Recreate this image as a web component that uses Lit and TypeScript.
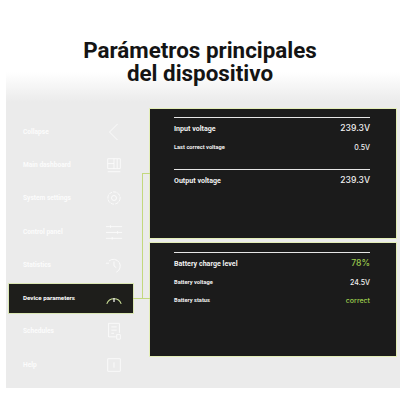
import { LitElement, html, css, svg } from "lit";
import { customElement } from "lit/decorators.js";

const s = (body: unknown) => html`<svg viewBox="0 0 20 20" width="18" height="18" fill="none" stroke="currentColor" stroke-width="1">${body}</svg>`;

const menu = [
  { label: "Collapse", icon: s(svg`<path d="M14 1 5 10l9 9"/>`) },
  { label: "Main dashboard", icon: s(svg`<path d="M3 3h14v11H3zM3 8.5h7M10 3v11M13.5 3v11M3 17.5h14"/>`) },
  { label: "System settings", icon: s(svg`<circle cx="10" cy="10" r="2.8"/><circle cx="10" cy="10" r="6.8" stroke-dasharray="4 1"/>`) },
  { label: "Control panel", icon: s(svg`<path d="M1 4h18M1 10.5h18M1 17h18M6 2.5v3M14 9v3M8 15.5v3"/>`) },
  { label: "Statistics", icon: s(svg`<path d="M4.5 5.5a7.5 7.5 0 1 1 8 12.5M10 6v5l2.5 2M1 8h3.5"/>`) },
  { label: "Device parameters", active: true, icon: s(svg`<path d="M2 16.5a8.5 8.5 0 0 1 16 0" stroke="#c9dd95" stroke-width="1.2"/><path d="M10 10v4.5" stroke="#f4f4f4" stroke-width="1.4"/>`) },
  { label: "Schedules", icon: s(svg`<path d="M16 12V1.5H4v15h8M7 5.5h6M7 9h6M7 12.5h3M13 14h4v5h-4z"/>`) },
  { label: "Help", icon: s(svg`<path d="M3 3h14v14H3zM10 7v6"/>`) },
];

@customElement("app-root")
export class AppRoot extends LitElement {
  static styles = css`
    :host { display: block; width: 400px; height: 400px; padding-top: 39px; box-sizing: border-box; background: #fff; overflow: hidden; font-family: "Roboto", "Liberation Sans", sans-serif; }
    .title { margin: 0; height: 33px; font-size: 22.4px; line-height: 23px; font-weight: 700; color: #141414; text-align: center; position: relative; z-index: 1; }
    .stage { position: relative; margin-left: 6px; height: 316px; background: linear-gradient(#ffffff 0, #ebebeb 30px); display: flex; }
    .side { width: 134px; flex: none; padding: 43px 0 0 3px; box-sizing: border-box; display: flex; flex-direction: column; }
    .row { height: 33.3px; flex: none; display: flex; align-items: center; justify-content: space-between; padding: 0 10px 0 14px; box-sizing: border-box; color: #fcfcfc; font-size: 6.6px; font-weight: 700; width: 124px; }
    .row.active { background: #1e1e1b; color: #fff; font-size: 6.2px; height: 29px; margin: 2.15px 0; outline: 1px solid #dbe7b4; }
    .main { flex: 1; padding: 37px 4px 0 10px; display: flex; flex-direction: column; gap: 5px; }
    .panel { background: #1b1b1b; outline: 1.5px solid #e4eeb8; padding: 8px 26px 0 24px; box-sizing: border-box; color: #f0f0f0; }
    .p1 { height: 129px; }
    .p2 { height: 113px; padding-top: 9px; }
    .group { border-top: 1px solid #e6e6e6; }
    .g1 { height: 51px; }
    .line { display: flex; justify-content: space-between; align-items: center; font-weight: 700; }
    .line.big { font-size: 7.1px; height: 20px; }
    .line.small { font-size: 5.7px; height: 18px; }
    .val { font-family: "Inter", "Open Sans", sans-serif; font-weight: 500; }
    .big .val { font-size: 8.6px; }
    .small .val { font-size: 7px; }
    .green { color: #9ccb4e; }
    .wire { position: absolute; background: #c3d87e; }
    .wv { left: 135.5px; top: 102px; width: 1px; height: 124px; }
    .wh1 { left: 135.5px; top: 101px; width: 8px; height: 1px; }
    .wh2 { left: 127px; top: 226px; width: 17px; height: 1px; }
  `;

  line(label: string, value: string, big = false, green = false) {
    return html`<div class="line ${big ? "big" : "small"}"><span>${label}</span><span class="val ${green ? "green" : ""}">${value}</span></div>`;
  }

  render() {
    return html`
      <h1 class="title">Parámetros principales<br />del dispositivo</h1>
      <div class="stage">
        <nav class="side">
          ${menu.map((m) => html`<div class="row ${m.active ? "active" : ""}"><span>${m.label}</span>${m.icon}</div>`)}
        </nav>
        <div class="main">
          <section class="panel p1">
            <div class="group g1">
              ${this.line("Input voltage", "239.3V", true)}
              ${this.line("Last correct voltage", "0.5V")}
            </div>
            <div class="group">
              ${this.line("Output voltage", "239.3V", true)}
            </div>
          </section>
          <section class="panel p2">
            <div class="group">
              ${this.line("Battery charge level", "78%", true, true)}
              ${this.line("Battery voltage", "24.5V")}
              ${this.line("Battery status", "correct", false, true)}
            </div>
          </section>
        </div>
        <i class="wire wv"></i><i class="wire wh1"></i><i class="wire wh2"></i>
      </div>
    `;
  }
}
